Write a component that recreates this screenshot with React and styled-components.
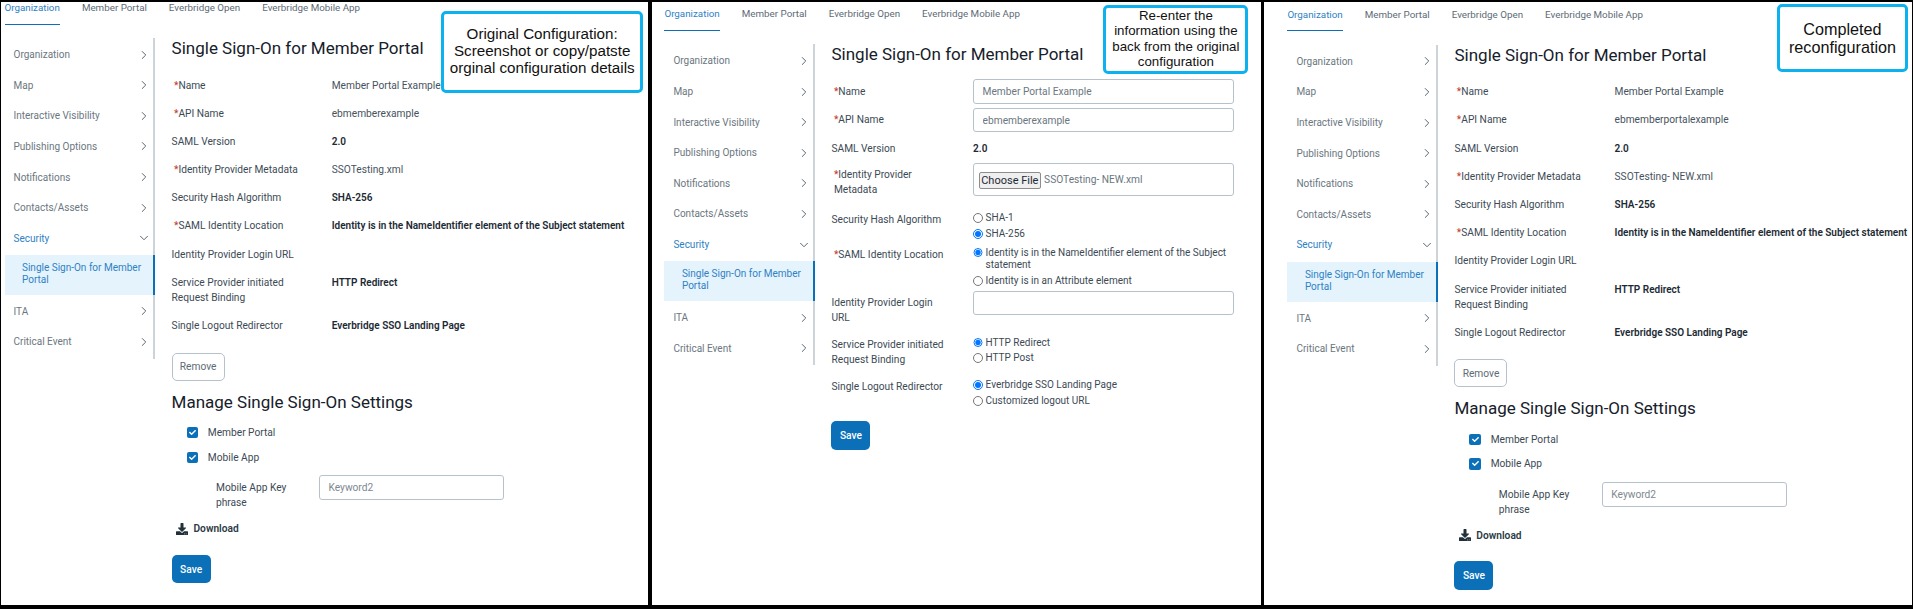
import React from "react"
import styled, {createGlobalStyle} from "styled-components"
import {FaDownload, FaCheck} from "react-icons/fa"
import {LuChevronRight, LuChevronDown} from "react-icons/lu"

const GlobalStyle = createGlobalStyle`
    html, body { margin: 0; padding: 0; background: #000; }
    * { box-sizing: border-box; }
    body { font-family: Roboto, "Liberation Sans", sans-serif; }
`

const TABS = ["Organization", "Member Portal", "Everbridge Open", "Everbridge Mobile App"]
const MENU = ["Organization", "Map", "Interactive Visibility", "Publishing Options", "Notifications", "Contacts/Assets"]

const Tabs = () => (
    <TabBar>
        {TABS.map((t, i) => <Tab key={t} $active={i === 0}>{t}</Tab>)}
    </TabBar>
)

const Chevron = ({open}) => open
    ? <LuChevronDown size={14} strokeWidth={1.6} color="#4d5b66"/>
    : <LuChevronRight size={14} strokeWidth={1.6} color="#4d5b66"/>

const Sidebar = () => (
    <Side>
        {MENU.map(m => <MenuItem key={m}>{m}<Chevron/></MenuItem>)}
        <MenuItem $open>Security<Chevron open/></MenuItem>
        <SubItem>Single Sign-On for Member<br/>Portal</SubItem>
        <MenuItem>ITA<Chevron/></MenuItem>
        <MenuItem>Critical Event<Chevron/></MenuItem>
    </Side>
)

const Label = ({req, children, ...rest}) => (
    <FieldLabel {...rest}>{req && <Star>*</Star>}{children}</FieldLabel>
)

const ViewRow = ({req, label, bold, children}) => (
    <ViewLine>
        <Label req={req} $req={req}>{label}</Label>
        <Value $bold={bold}>{children}</Value>
    </ViewLine>
)

const ViewMode = ({api, file}) => (
    <Main>
        <Title>Single Sign-On for Member Portal</Title>
        <ViewRow req label="Name">Member Portal Example</ViewRow>
        <ViewRow req label="API Name">{api}</ViewRow>
        <ViewRow label="SAML Version" bold>2.0</ViewRow>
        <ViewRow req label="Identity Provider Metadata">{file}</ViewRow>
        <ViewRow label="Security Hash Algorithm" bold>SHA-256</ViewRow>
        <ViewRow req label="SAML Identity Location" bold>Identity is in the NameIdentifier element of the Subject statement</ViewRow>
        <ViewRow label="Identity Provider Login URL"/>
        <ViewRow label={<>Service Provider initiated<br/>Request Binding</>} bold>HTTP Redirect</ViewRow>
        <ViewRow label="Single Logout Redirector" bold>Everbridge SSO Landing Page</ViewRow>
        <RemoveButton>Remove</RemoveButton>
        <Title $manage>Manage Single Sign-On Settings</Title>
        <CheckRow><CheckBox><FaCheck size={7} color="#fff"/></CheckBox>Member Portal</CheckRow>
        <CheckRow><CheckBox><FaCheck size={7} color="#fff"/></CheckBox>Mobile App</CheckRow>
        <KeyRow>
            <KeyLabel>Mobile App Key<br/>phrase</KeyLabel>
            <KeyInput placeholder="Keyword2" readOnly/>
        </KeyRow>
        <DownloadRow><FaDownload size={12} color="#22303a"/>Download</DownloadRow>
        <SaveButton>Save</SaveButton>
    </Main>
)

const Radio = ({on, children, wrap}) => (
    <RadioLine $wrap={wrap}>
        <RadioDot type="radio" checked={!!on} readOnly/>
        <span>{children}</span>
    </RadioLine>
)

const EditMode = () => (
    <Main>
        <Title $edit>Single Sign-On for Member Portal</Title>
        <FormRow $gap={4}>
            <Label req $req $pad={4.5}>Name</Label>
            <TextInput value="Member Portal Example" readOnly/>
        </FormRow>
        <FormRow $gap={9}>
            <Label req $req $pad={4.5}>API Name</Label>
            <TextInput value="ebmemberexample" readOnly/>
        </FormRow>
        <FormRow $gap={7}>
            <Label>SAML Version</Label>
            <Value $bold>2.0</Value>
        </FormRow>
        <FormRow $gap={12.8}>
            <Label req $req $pad={4}>Identity Provider<br/>Metadata</Label>
            <FileBox><ChooseFile>Choose File</ChooseFile>SSOTesting- NEW.xml</FileBox>
        </FormRow>
        <FormRow $gap={3}>
            <Label $pad={2}>Security Hash Algorithm</Label>
            <div>
                <Radio>SHA-1</Radio>
                <Radio on>SHA-256</Radio>
            </div>
        </FormRow>
        <FormRow $gap={1.5}>
            <Label req $req $pad={2}>SAML Identity Location</Label>
            <div>
                <Radio on wrap>Identity is in the NameIdentifier element of the Subject statement</Radio>
                <Radio>Identity is in an Attribute element</Radio>
            </div>
        </FormRow>
        <FormRow $gap={9.5}>
            <Label $pad={4.5}>Identity Provider Login<br/>URL</Label>
            <TextInput readOnly/>
        </FormRow>
        <FormRow $gap={10.7}>
            <Label $pad={2}>Service Provider initiated<br/>Request Binding</Label>
            <div>
                <Radio on>HTTP Redirect</Radio>
                <Radio>HTTP Post</Radio>
            </div>
        </FormRow>
        <FormRow $gap={12}>
            <Label $pad={2}>Single Logout Redirector</Label>
            <div>
                <Radio on>Everbridge SSO Landing Page</Radio>
                <Radio>Customized logout URL</Radio>
            </div>
        </FormRow>
        <SaveButton>Save</SaveButton>
    </Main>
)

const App = () => (
    <>
        <GlobalStyle/>
        <Page>
            <Panel $width={647.3} $left={3.5} $top={0}>
                <Tabs/>
                <Body><Sidebar/><ViewMode api="ebmemberexample" file="SSOTesting.xml"/></Body>
                <Callout $top={9.5} $right={5.3} $width={201.7} $height={82} $size={15.2} $line={17} $lift={4}>
                    Original Configuration:<br/>Screenshot or copy/patste<br/>orginal configuration details
                </Callout>
            </Panel>
            <Panel $width={608.9} $left={12.5} $top={6.3}>
                <Tabs/>
                <Body><Sidebar/><EditMode/></Body>
                <Callout $top={3.5} $right={12.4} $width={145} $height={69} $size={13.3} $line={15.3} $lift={2}>
                    Re-enter the<br/>information using the<br/>back from the original<br/>configuration
                </Callout>
            </Panel>
            <Panel $width={647.6} $left={23} $top={6.7}>
                <Tabs/>
                <Body><Sidebar/><ViewMode api="ebmemberportalexample" file="SSOTesting- NEW.xml"/></Body>
                <Callout $top={2.5} $right={4} $width={131} $height={68} $size={16.2} $line={18.3} $lift={0}>
                    Completed<br/>reconfiguration
                </Callout>
            </Panel>
        </Page>
    </>
)

const Page = styled.div`
    width: 1913px;
    height: 609px;
    display: flex;
    gap: 3.6px;
    padding: 1.5px 1px 4px 1px;
    background: #000;
    overflow: hidden;
`

const Panel = styled.section`
    position: relative;
    flex: none;
    width: ${p => p.$width}px;
    height: 100%;
    padding: ${p => p.$top}px 0 0 ${p => p.$left}px;
    background: #fff;
    overflow: hidden;
`

const TabBar = styled.nav`
    display: flex;
    gap: 22px;
    margin-bottom: 13.5px;
`

const Tab = styled.div`
    height: 23px;
    padding-top: 0.5px;
    font-size: 9.8px;
    line-height: 12px;
    color: ${p => p.$active ? "#2e82c4" : "#5d6b76"};
    border-bottom: ${p => p.$active ? "1.5px solid #0b70b8" : "none"};
`

const Body = styled.div`
    display: flex;
    align-items: flex-start;
`

const Side = styled.aside`
    flex: none;
    width: 150.5px;
    height: 321px;
    padding-top: 1.4px;
    border-right: 2px solid #ccd4da;
`

const MenuItem = styled.div`
    display: flex;
    align-items: center;
    justify-content: space-between;
    height: 30.6px;
    padding: 0 2px 0 9px;
    font-size: 10px;
    color: ${p => p.$open ? "#2e82c4" : "#6b7780"};
`

const SubItem = styled.div`
    width: 150.5px;
    height: 40px;
    margin: 1.5px 0 1px;
    padding: 7px 0 0 17.5px;
    font-size: 10px;
    line-height: 12px;
    white-space: nowrap;
    color: #2e82c4;
    background: #e5f3fd;
    border-right: 2px solid #0b70b8;
`

const Main = styled.main`
    flex: 1;
    min-width: 0;
    margin-left: 16.6px;
    color: #3c4a55;
    font-size: 10.2px;
    line-height: 15px;
`

const Title = styled.h2`
    margin: 0 0 ${p => p.$manage ? "13.5px" : p.$edit ? "15px" : "19.5px"};
    font-size: 17px;
    font-weight: 400;
    line-height: 20px;
    white-space: nowrap;
    color: #16202a;
`

const ViewLine = styled.div`
    display: grid;
    grid-template-columns: 160.1px 1fr;
    margin-bottom: 13.2px;
`

const FieldLabel = styled.div`
    padding-top: ${p => p.$pad || 0}px;
    padding-left: ${p => p.$req ? "2.4px" : 0};
    color: #3c4a55;
    white-space: nowrap;
`

const Star = styled.span`
    color: #c0392b;
`

const Value = styled.div`
    font-size: ${p => p.$bold ? "10px" : "10.2px"};
    font-weight: ${p => p.$bold ? 600 : 400};
    color: ${p => p.$bold ? "#1c2a34" : "#46535e"};
    white-space: nowrap;
`

const FormRow = styled.div`
    display: grid;
    grid-template-columns: 141.6px 260.5px;
    margin-bottom: ${p => p.$gap}px;
`

const TextInput = styled.input`
    width: 100%;
    height: 24.6px;
    padding: 0 8.5px;
    font: 10.2px Roboto, sans-serif;
    color: #6b7780;
    background: #fff;
    border: 1px solid #b5c2cc;
    border-radius: 3px;
    outline: none;
`

const FileBox = styled.div`
    display: flex;
    align-items: flex-start;
    height: 32.4px;
    padding: 7.5px 0 0 4.5px;
    gap: 3px;
    font-size: 10.2px;
    line-height: 15px;
    color: #6b7780;
    border: 1px solid #b5c2cc;
    border-radius: 3px;
`

const ChooseFile = styled.span`
    flex: none;
    width: 62.5px;
    height: 16.8px;
    font-size: 11px;
    line-height: 15px;
    text-align: center;
    color: #1c2a34;
    background: #efefef;
    border: 1px solid #8d8d8d;
    border-radius: 2px;
`

const RadioLine = styled.label`
    display: flex;
    align-items: flex-start;
    gap: 3px;
    min-height: 15.8px;
    padding-top: 2px;
    font-size: 10px;
    line-height: 12px;
    color: #3c4a55;
    margin-bottom: ${p => p.$wrap ? "2.5px" : 0};
`

const RadioDot = styled.input`
    flex: none;
    width: 9.5px;
    height: 9.5px;
    margin: 1px 0 0;
`

const RemoveButton = styled.button`
    display: block;
    width: 53px;
    height: 28.3px;
    margin: 19.5px 0 11px;
    padding: 0;
    font: 10.2px Roboto, sans-serif;
    color: #5d6b76;
    background: #fff;
    border: 1px solid #b5c2cc;
    border-radius: 5px;
`

const CheckRow = styled.div`
    display: flex;
    align-items: center;
    gap: 10px;
    margin: 0 0 9.5px 15px;
    height: 15px;
    color: #3c4a55;
`

const CheckBox = styled.span`
    display: flex;
    align-items: center;
    justify-content: center;
    width: 11.2px;
    height: 11.2px;
    background: #0b70b8;
    border-radius: 2px;
`

const KeyRow = styled.div`
    display: flex;
    align-items: flex-start;
    margin: 10.7px 0 11.3px 44.4px;
`

const KeyLabel = styled.div`
    flex: none;
    width: 103px;
    padding-top: 4.5px;
`

const KeyInput = styled.input`
    width: 185px;
    height: 25px;
    padding: 0 8.5px;
    font: 10.2px Roboto, sans-serif;
    background: #fff;
    border: 1px solid #b5c2cc;
    border-radius: 3px;
    outline: none;
    &::placeholder { color: #7d8891; opacity: 1; }
`

const DownloadRow = styled.div`
    display: flex;
    align-items: center;
    gap: 5.5px;
    height: 15px;
    margin: 0 0 18.5px 4.4px;
    font-weight: 600;
    color: #2c3a45;
`

const SaveButton = styled.button`
    display: block;
    width: 39px;
    height: 28.7px;
    padding: 0;
    font: 500 10.2px Roboto, sans-serif;
    color: #fff;
    background: #0b70b8;
    border: none;
    border-radius: 5px;
`

const Callout = styled.aside`
    position: absolute;
    top: ${p => p.$top}px;
    right: ${p => p.$right}px;
    width: ${p => p.$width}px;
    height: ${p => p.$height}px;
    display: flex;
    align-items: center;
    justify-content: center;
    padding-bottom: ${p => p.$lift}px;
    text-align: center;
    font-family: "Liberation Sans", Arial, sans-serif;
    font-size: ${p => p.$size}px;
    line-height: ${p => p.$line}px;
    color: #111;
    background: #fff;
    border: 3.5px solid #0cb1ee;
    border-radius: 5px;
`

export default App
